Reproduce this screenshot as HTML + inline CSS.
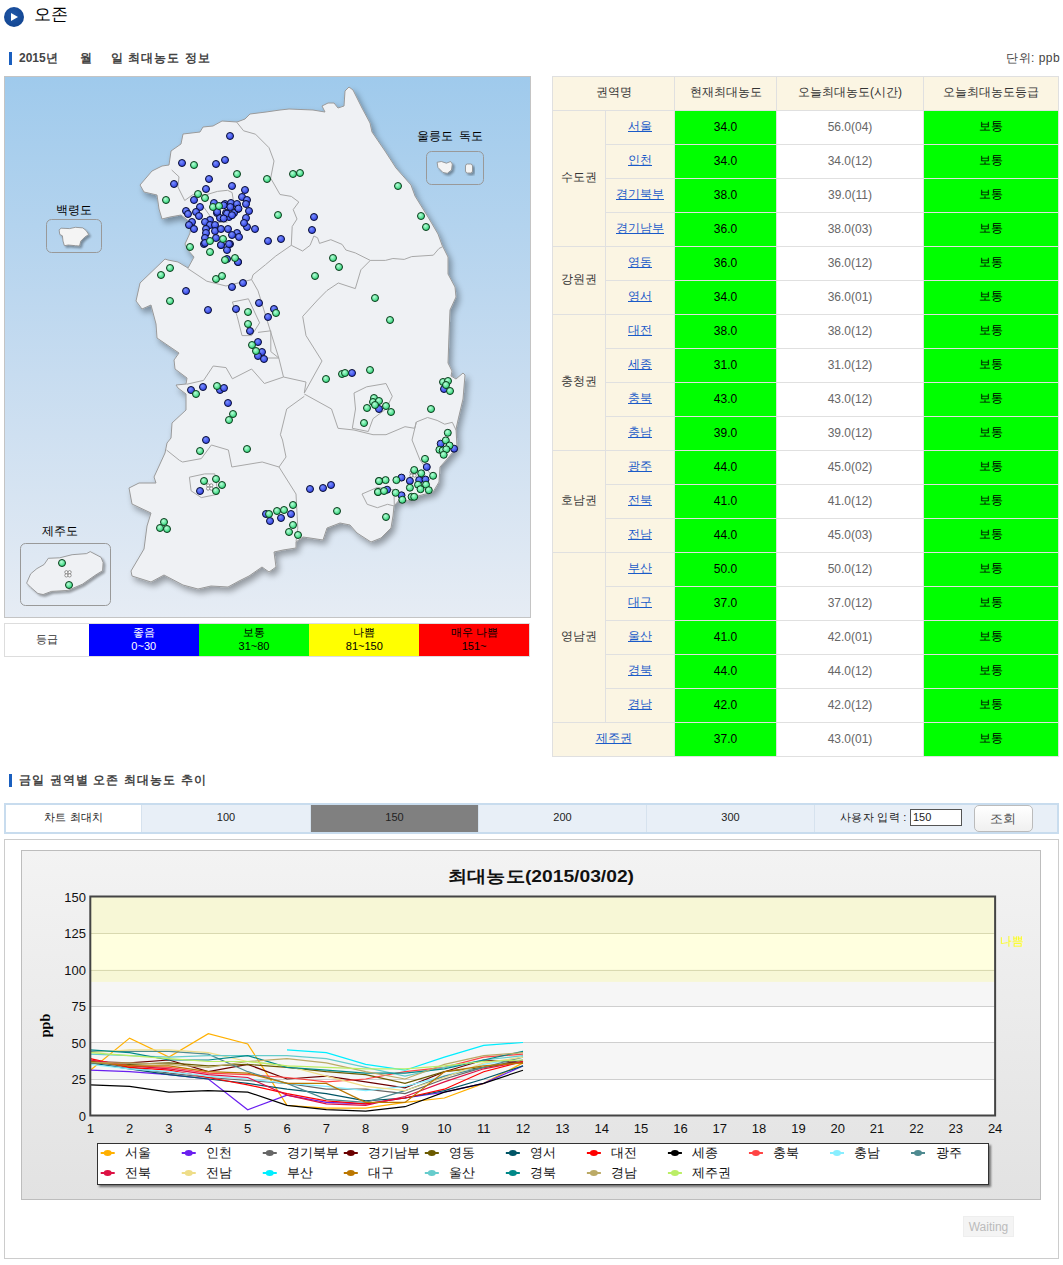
<!DOCTYPE html><html><head><meta charset="utf-8"><style>
*{margin:0;padding:0;box-sizing:border-box}
html,body{width:1063px;height:1265px;overflow:hidden;background:#fff;font-family:"Liberation Sans",sans-serif;color:#333}
.a{position:absolute}
#ttl{left:34px;top:4px;font-size:17px;color:#000;line-height:22px}
.ico{left:4px;top:7px;width:20px;height:20px;border-radius:50%;background:radial-gradient(circle at 45% 40%,#2258a8,#0d3f8a)}
.ico:after{content:"";position:absolute;left:7px;top:6px;border-left:7px solid #fff;border-top:4.5px solid transparent;border-bottom:4.5px solid transparent}
.hbar{width:3px;height:13px;background:#1a5fbf}
.h2{font-size:12px;font-weight:bold;color:#444;line-height:14px}
#leg{left:4px;top:623px;width:526px;height:34px;border:1px solid #ddd;display:flex;font-size:11px;text-align:center}
#leg div{height:100%;display:flex;flex-direction:column;justify-content:center;line-height:14px;color:#000;padding-bottom:3px}
#tbl{left:552px;top:76px;border-collapse:collapse;font-size:12px;text-align:center;table-layout:fixed}
#tbl td{border:1px solid #e0e0e0;height:34px;padding:0 0 2px 0;white-space:nowrap}
#tbl .hd{background:#fbf5e3;color:#333}
#tbl .g{background:#00ff00;color:#000}
#tbl .w{background:#fff;color:#666}
#tbl a{color:#1a5ac8;text-decoration:underline}
#bar{left:4px;top:803px;width:1055px;height:31px;border:2px solid #c8dcee;display:flex;font-size:11px;color:#222}
#bar>div{display:flex;align-items:center;justify-content:center;border-left:1px solid #d6e2ee;height:100%;background:#e8eff7;padding-bottom:3px}
#panel{left:4px;top:839px;width:1055px;height:420px;border:1px solid #ccc}
</style></head><body>
<div class="a ico"></div><div class="a" id="ttl">오존</div>
<div class="a hbar" style="left:9px;top:52px"></div>
<div class="a h2" style="left:19px;top:51px">2015년</div><div class="a h2" style="left:80px;top:51px">월</div><div class="a h2" style="left:111px;top:51px;letter-spacing:1px">일 최대농도 정보</div>
<div class="a" style="left:1006px;top:50px;font-size:12px;color:#444;letter-spacing:.5px">단위: ppb</div>
<svg class="a" style="left:4px;top:76px" width="527" height="542" viewBox="0 0 527 542"><defs><linearGradient id="sea" x1="0" y1="0" x2="0" y2="1"><stop offset="0" stop-color="#9fcaec"/><stop offset="0.55" stop-color="#c7dcf0"/><stop offset="1" stop-color="#e6ecf4"/></linearGradient><filter id="sh" x="-10%" y="-10%" width="120%" height="120%"><feGaussianBlur in="SourceAlpha" stdDeviation="3"/><feOffset dx="3" dy="4"/><feComponentTransfer><feFuncA type="linear" slope="0.35"/></feComponentTransfer><feMerge><feMergeNode/><feMergeNode in="SourceGraphic"/></feMerge></filter><radialGradient id="bd" cx="0.4" cy="0.35" r="0.7"><stop offset="0" stop-color="#7a90ff"/><stop offset="1" stop-color="#2838e0"/></radialGradient><radialGradient id="gd" cx="0.4" cy="0.35" r="0.7"><stop offset="0" stop-color="#b8ffd8"/><stop offset="1" stop-color="#22d070"/></radialGradient><filter id="sh2" x="-30%" y="-30%" width="160%" height="160%"><feGaussianBlur in="SourceAlpha" stdDeviation="1.2"/><feOffset dx="1.5" dy="2"/><feComponentTransfer><feFuncA type="linear" slope="0.35"/></feComponentTransfer><feMerge><feMergeNode/><feMergeNode in="SourceGraphic"/></feMerge></filter></defs><rect x="0.5" y="0.5" width="526" height="541" fill="url(#sea)" stroke="#c4c4c4" stroke-width="1"/><polygon points="136,109 148,95 158,90 165,89 167,75 177,68 179,58 196,56 199,51 209,50 218,45 233,46 241,43 246,38 262,36 276,34 285,33 309,34 321,36 318,30 324,27 330,27 334,32 340,30 341,15 345,11 349,14 358,32 366,47 368,56 381,75 392,92 407,109 411,120 424,141 434,158 438,169 444,181 444,198 451,211 452,221 446,234 445,259 444,287 448,295 447,300 452,303 459,297 461,299 459,323 454,344 452,353 453,371 444,382 436,391 435,406 429,416 414,420 404,425 397,422 390,430 389,440 387,452 377,462 367,466 353,457 346,449 336,447 323,452 319,464 306,462 299,461 292,466 292,472 279,474 270,476 272,491 265,496 258,491 245,500 235,505 224,511 207,510 194,513 179,509 160,499 147,506 128,500 127,495 140,473 143,450 147,437 128,428 125,412 135,407 152,407 150,401 161,377 163,367 167,362 168,347 182,334 182,318 174,312 172,309 182,308 183,302 171,293 170,284 175,277 153,262 152,248 147,229 138,233 132,225 136,207 161,183 164,184 174,186 184,192 190,181 183,173 181,168 186,157 187,147 177,139 166,141 158,143 155,133 153,119 140,116" fill="#eff1f4" stroke="#9a9a9a" stroke-width="1" filter="url(#sh)"/><rect x="42.5" y="143.5" width="55" height="33" rx="5" fill="none" stroke="#999" stroke-width="1"/><polygon points="55.1,153.9 57.1,152.2 65.6,152.6 71.5,151.3 78.8,151.9 82.1,154.5 84.7,158.5 80.8,161.1 76.8,165.1 75.5,170.0 71.5,169.7 64.3,169.0 60.4,169.7 59.0,165.1 58.4,159.8 55.8,158.5" fill="#f4f4f4" stroke="#888" stroke-width=".8" filter="url(#sh2)"/><rect x="422.5" y="75.5" width="57" height="33" rx="5" fill="none" stroke="#999" stroke-width="1"/><polygon points="433.1,86.3 437.3,85.5 442.4,87.2 446.6,85.5 448.3,88.0 447.5,94.0 443.3,97.3 439.0,96.5 433.9,91.4" fill="#f4f4f4" stroke="#888" stroke-width=".8" filter="url(#sh2)"/><rect x="461.5" y="88" width="7" height="9" rx="2" fill="#f4f4f4" stroke="#888" stroke-width=".8" filter="url(#sh2)"/><rect x="16.5" y="467.5" width="90" height="62" rx="5" fill="none" stroke="#999" stroke-width="1"/><polygon points="22.6,507.1 26.7,497.8 32.9,492.6 40.1,488.5 44.3,482.3 55.7,481.8 68.1,478.7 82.6,477.6 86.2,475.6 97.0,481.3 99.1,486.4 98.6,494.7 91.9,498.8 78.4,508.2 63.9,514.4 47.4,515.4 39.1,518.5 33.9,517.5 26.7,511.3" fill="#eff1f4" stroke="#888" stroke-width=".8" filter="url(#sh2)"/><text x="70" y="138" font-size="12" fill="#000" text-anchor="middle">백령도</text><text x="446" y="64" font-size="12" fill="#000" text-anchor="middle">울릉도 &#160;독도</text><text x="56" y="459" font-size="12" fill="#000" text-anchor="middle">제주도</text><polyline points="232.8,46.3 239.6,54.8 251.5,58.2 265.0,71.7 270.0,85.0 266.7,102.2 276.0,118.5 287.3,120.4 294.8,126.0 289.2,133.6 293.0,143.0 288.2,150.5 287.3,169.3 271.8,180.0 261.6,188.6 249.0,198.8 247.6,203.6" fill="none" stroke="#a8a8a8" stroke-width="1"/><polyline points="183.6,192.4 202.8,205.2 222.0,210.0 247.6,203.6" fill="none" stroke="#a8a8a8" stroke-width="1"/><polyline points="247.6,203.6 254.0,214.8 266.8,256.4 274.8,282.0 279.5,301.0 302.0,306.0 300.3,317.0" fill="none" stroke="#a8a8a8" stroke-width="1"/><polyline points="287.3,169.3 298.6,175.0 306.1,169.3 309.9,160.0 313.6,161.8 315.5,167.4 326.8,163.7 338.1,168.4 341.9,174.0 351.3,176.9 366.3,184.4 381.4,184.4 388.9,182.5 400.2,183.4 407.7,180.6 429.3,179.2 435.0,172.5 438.8,170.6" fill="none" stroke="#a8a8a8" stroke-width="1"/><polyline points="366.3,184.4 356.9,193.8 351.3,212.6 334.3,207.0 323.0,214.5 313.6,224.0 298.7,240.4 302.0,259.6 318.0,285.0 300.3,317.0" fill="none" stroke="#a8a8a8" stroke-width="1"/><polyline points="182.4,308.3 199.6,304.4 209.2,290.0 222.0,291.6 228.4,302.8 247.6,293.0 260.4,307.5 279.5,301.0" fill="none" stroke="#a8a8a8" stroke-width="1"/><polyline points="300.3,320.3 282.7,333.0 276.4,358.7 278.5,364.0 282.0,381.0 275.0,391.0" fill="none" stroke="#a8a8a8" stroke-width="1"/><polyline points="162.5,374.0 175.5,384.4 178.6,386.0 197.3,382.6 207.4,369.0 224.4,374.0 227.8,391.0 258.2,386.0 275.0,391.0" fill="none" stroke="#a8a8a8" stroke-width="1"/><polyline points="275.0,391.0 292.0,418.0 293.8,452.0 292.0,465.6" fill="none" stroke="#a8a8a8" stroke-width="1"/><polyline points="300.3,318.0 327.5,333.0 334.0,352.3 350.0,354.0 369.0,358.7 382.0,358.7 401.0,350.7 410.7,352.3 412.3,346.0 423.6,341.5 433.1,344.4 440.7,348.2 448.3,346.3 452.0,354.0" fill="none" stroke="#a8a8a8" stroke-width="1"/><polyline points="350.0,317.0 362.7,310.8 382.0,307.5 388.3,320.3 382.0,333.0 369.0,342.7 364.3,355.5 348.3,352.3 351.5,333.0 350.0,317.0" fill="none" stroke="#a8a8a8" stroke-width="1"/><polyline points="185.4,401.2 200.7,397.9 210.8,397.9 214.2,418.2 197.3,421.6 187.1,414.8 185.4,401.2" fill="none" stroke="#a8a8a8" stroke-width="1"/><polyline points="228.4,226.0 244.4,222.8 255.6,246.8 247.6,259.6 238.0,259.6 233.2,240.4 228.4,226.0" fill="none" stroke="#a8a8a8" stroke-width="1"/><polyline points="254.0,256.4 266.8,254.8 266.8,275.6 274.8,282.0 260.4,282.0 250.8,278.8 246.0,266.0" fill="none" stroke="#a8a8a8" stroke-width="1"/><polyline points="412.3,346.0 408.0,364.0 416.0,384.0 428.0,400.0" fill="none" stroke="#a8a8a8" stroke-width="1"/><polyline points="167.7,94.0 175.0,100.8 173.9,110.9 180.7,124.5 188.6,118.8 202.1,118.8 213.4,115.4 223.6,114.3 228.1,116.6 229.2,123.4" fill="none" stroke="#a8a8a8" stroke-width="1"/><polyline points="199.9,131.3 205.5,139.2 208.9,147.0 223.6,146.0" fill="none" stroke="#a8a8a8" stroke-width="1"/><polyline points="358.0,418.0 373.4,411.4 390.0,414.0 390.3,430.0 383.5,428.3 373.4,431.7 363.2,428.3 358.0,418.0" fill="none" stroke="#a8a8a8" stroke-width="1"/><g fill="#fff" stroke="#777" stroke-width=".8"><circle cx="62.4" cy="496.2" r="1.6"/><circle cx="65.6" cy="496.2" r="1.6"/><circle cx="62.4" cy="499.4" r="1.6"/><circle cx="65.6" cy="499.4" r="1.6"/></g><g fill="#fff" stroke="#777" stroke-width=".8"><circle cx="204.1" cy="409.4" r="1.6"/><circle cx="207.3" cy="409.4" r="1.6"/><circle cx="204.1" cy="412.6" r="1.6"/><circle cx="207.3" cy="412.6" r="1.6"/></g><g fill="#fff" stroke="#777" stroke-width=".8"><circle cx="407.4" cy="396.4" r="1.6"/><circle cx="410.6" cy="396.4" r="1.6"/><circle cx="407.4" cy="399.6" r="1.6"/><circle cx="410.6" cy="399.6" r="1.6"/></g><circle cx="226" cy="60" r="3.5" fill="url(#bd)" stroke="#0a0f30" stroke-width="1"/><circle cx="178" cy="87" r="3.5" fill="url(#bd)" stroke="#0a0f30" stroke-width="1"/><circle cx="212" cy="88" r="3.5" fill="url(#bd)" stroke="#0a0f30" stroke-width="1"/><circle cx="221" cy="84" r="3.5" fill="url(#bd)" stroke="#0a0f30" stroke-width="1"/><circle cx="205" cy="103" r="3.5" fill="url(#bd)" stroke="#0a0f30" stroke-width="1"/><circle cx="170" cy="108" r="3.5" fill="url(#bd)" stroke="#0a0f30" stroke-width="1"/><circle cx="202" cy="113" r="3.5" fill="url(#bd)" stroke="#0a0f30" stroke-width="1"/><circle cx="228" cy="110" r="3.5" fill="url(#bd)" stroke="#0a0f30" stroke-width="1"/><circle cx="241" cy="114" r="3.5" fill="url(#bd)" stroke="#0a0f30" stroke-width="1"/><circle cx="190" cy="124" r="3.5" fill="url(#bd)" stroke="#0a0f30" stroke-width="1"/><circle cx="196" cy="131" r="3.5" fill="url(#bd)" stroke="#0a0f30" stroke-width="1"/><circle cx="192" cy="136" r="3.5" fill="url(#bd)" stroke="#0a0f30" stroke-width="1"/><circle cx="195" cy="140" r="3.5" fill="url(#bd)" stroke="#0a0f30" stroke-width="1"/><circle cx="182" cy="135" r="3.5" fill="url(#bd)" stroke="#0a0f30" stroke-width="1"/><circle cx="184" cy="138" r="3.5" fill="url(#bd)" stroke="#0a0f30" stroke-width="1"/><circle cx="238" cy="121" r="3.5" fill="url(#bd)" stroke="#0a0f30" stroke-width="1"/><circle cx="243" cy="124" r="3.5" fill="url(#bd)" stroke="#0a0f30" stroke-width="1"/><circle cx="242" cy="128" r="3.5" fill="url(#bd)" stroke="#0a0f30" stroke-width="1"/><circle cx="245" cy="135" r="3.5" fill="url(#bd)" stroke="#0a0f30" stroke-width="1"/><circle cx="210" cy="127" r="3.5" fill="url(#bd)" stroke="#0a0f30" stroke-width="1"/><circle cx="221" cy="128" r="3.5" fill="url(#bd)" stroke="#0a0f30" stroke-width="1"/><circle cx="227" cy="127" r="3.5" fill="url(#bd)" stroke="#0a0f30" stroke-width="1"/><circle cx="233" cy="128" r="3.5" fill="url(#bd)" stroke="#0a0f30" stroke-width="1"/><circle cx="234" cy="133" r="3.5" fill="url(#bd)" stroke="#0a0f30" stroke-width="1"/><circle cx="213" cy="137" r="3.5" fill="url(#bd)" stroke="#0a0f30" stroke-width="1"/><circle cx="222" cy="137" r="3.5" fill="url(#bd)" stroke="#0a0f30" stroke-width="1"/><circle cx="230" cy="137" r="3.5" fill="url(#bd)" stroke="#0a0f30" stroke-width="1"/><circle cx="216" cy="142" r="3.5" fill="url(#bd)" stroke="#0a0f30" stroke-width="1"/><circle cx="225" cy="141" r="3.5" fill="url(#bd)" stroke="#0a0f30" stroke-width="1"/><circle cx="242" cy="142" r="3.5" fill="url(#bd)" stroke="#0a0f30" stroke-width="1"/><circle cx="243" cy="151" r="3.5" fill="url(#bd)" stroke="#0a0f30" stroke-width="1"/><circle cx="251" cy="153" r="3.5" fill="url(#bd)" stroke="#0a0f30" stroke-width="1"/><circle cx="240" cy="147" r="3.5" fill="url(#bd)" stroke="#0a0f30" stroke-width="1"/><circle cx="188" cy="146" r="3.5" fill="url(#bd)" stroke="#0a0f30" stroke-width="1"/><circle cx="185" cy="149" r="3.5" fill="url(#bd)" stroke="#0a0f30" stroke-width="1"/><circle cx="190" cy="153" r="3.5" fill="url(#bd)" stroke="#0a0f30" stroke-width="1"/><circle cx="206" cy="144" r="3.5" fill="url(#bd)" stroke="#0a0f30" stroke-width="1"/><circle cx="201" cy="146" r="3.5" fill="url(#bd)" stroke="#0a0f30" stroke-width="1"/><circle cx="206" cy="149" r="3.5" fill="url(#bd)" stroke="#0a0f30" stroke-width="1"/><circle cx="211" cy="149" r="3.5" fill="url(#bd)" stroke="#0a0f30" stroke-width="1"/><circle cx="202" cy="153" r="3.5" fill="url(#bd)" stroke="#0a0f30" stroke-width="1"/><circle cx="202" cy="157" r="3.5" fill="url(#bd)" stroke="#0a0f30" stroke-width="1"/><circle cx="211" cy="155" r="3.5" fill="url(#bd)" stroke="#0a0f30" stroke-width="1"/><circle cx="217" cy="153" r="3.5" fill="url(#bd)" stroke="#0a0f30" stroke-width="1"/><circle cx="224" cy="153" r="3.5" fill="url(#bd)" stroke="#0a0f30" stroke-width="1"/><circle cx="233" cy="157" r="3.5" fill="url(#bd)" stroke="#0a0f30" stroke-width="1"/><circle cx="228" cy="159" r="3.5" fill="url(#bd)" stroke="#0a0f30" stroke-width="1"/><circle cx="235" cy="161" r="3.5" fill="url(#bd)" stroke="#0a0f30" stroke-width="1"/><circle cx="201" cy="162" r="3.5" fill="url(#bd)" stroke="#0a0f30" stroke-width="1"/><circle cx="212" cy="162" r="3.5" fill="url(#bd)" stroke="#0a0f30" stroke-width="1"/><circle cx="200" cy="168" r="3.5" fill="url(#bd)" stroke="#0a0f30" stroke-width="1"/><circle cx="217" cy="169" r="3.5" fill="url(#bd)" stroke="#0a0f30" stroke-width="1"/><circle cx="226" cy="168" r="3.5" fill="url(#bd)" stroke="#0a0f30" stroke-width="1"/><circle cx="223" cy="174" r="3.5" fill="url(#bd)" stroke="#0a0f30" stroke-width="1"/><circle cx="223" cy="183" r="3.5" fill="url(#bd)" stroke="#0a0f30" stroke-width="1"/><circle cx="234" cy="186" r="3.5" fill="url(#bd)" stroke="#0a0f30" stroke-width="1"/><circle cx="264" cy="165" r="3.5" fill="url(#bd)" stroke="#0a0f30" stroke-width="1"/><circle cx="277" cy="163" r="3.5" fill="url(#bd)" stroke="#0a0f30" stroke-width="1"/><circle cx="310" cy="141" r="3.5" fill="url(#bd)" stroke="#0a0f30" stroke-width="1"/><circle cx="308" cy="154" r="3.5" fill="url(#bd)" stroke="#0a0f30" stroke-width="1"/><circle cx="201" cy="167" r="3.5" fill="url(#bd)" stroke="#0a0f30" stroke-width="1"/><circle cx="217" cy="169" r="3.5" fill="url(#bd)" stroke="#0a0f30" stroke-width="1"/><circle cx="225" cy="168" r="3.5" fill="url(#bd)" stroke="#0a0f30" stroke-width="1"/><circle cx="234" cy="186" r="3.5" fill="url(#bd)" stroke="#0a0f30" stroke-width="1"/><circle cx="228" cy="211" r="3.5" fill="url(#bd)" stroke="#0a0f30" stroke-width="1"/><circle cx="239" cy="207" r="3.5" fill="url(#bd)" stroke="#0a0f30" stroke-width="1"/><circle cx="182" cy="215" r="3.5" fill="url(#bd)" stroke="#0a0f30" stroke-width="1"/><circle cx="204" cy="234" r="3.5" fill="url(#bd)" stroke="#0a0f30" stroke-width="1"/><circle cx="232" cy="233" r="3.5" fill="url(#bd)" stroke="#0a0f30" stroke-width="1"/><circle cx="255" cy="227" r="3.5" fill="url(#bd)" stroke="#0a0f30" stroke-width="1"/><circle cx="270" cy="233" r="3.5" fill="url(#bd)" stroke="#0a0f30" stroke-width="1"/><circle cx="264" cy="241" r="3.5" fill="url(#bd)" stroke="#0a0f30" stroke-width="1"/><circle cx="246" cy="255" r="3.5" fill="url(#bd)" stroke="#0a0f30" stroke-width="1"/><circle cx="254" cy="266" r="3.5" fill="url(#bd)" stroke="#0a0f30" stroke-width="1"/><circle cx="258" cy="276" r="3.5" fill="url(#bd)" stroke="#0a0f30" stroke-width="1"/><circle cx="254" cy="280" r="3.5" fill="url(#bd)" stroke="#0a0f30" stroke-width="1"/><circle cx="260" cy="283" r="3.5" fill="url(#bd)" stroke="#0a0f30" stroke-width="1"/><circle cx="348" cy="297" r="3.5" fill="url(#bd)" stroke="#0a0f30" stroke-width="1"/><circle cx="187" cy="314" r="3.5" fill="url(#bd)" stroke="#0a0f30" stroke-width="1"/><circle cx="199" cy="311" r="3.5" fill="url(#bd)" stroke="#0a0f30" stroke-width="1"/><circle cx="216" cy="314" r="3.5" fill="url(#bd)" stroke="#0a0f30" stroke-width="1"/><circle cx="220" cy="312" r="3.5" fill="url(#bd)" stroke="#0a0f30" stroke-width="1"/><circle cx="224" cy="327" r="3.5" fill="url(#bd)" stroke="#0a0f30" stroke-width="1"/><circle cx="202" cy="364" r="3.5" fill="url(#bd)" stroke="#0a0f30" stroke-width="1"/><circle cx="375" cy="333" r="3.5" fill="url(#bd)" stroke="#0a0f30" stroke-width="1"/><circle cx="440" cy="313" r="3.5" fill="url(#bd)" stroke="#0a0f30" stroke-width="1"/><circle cx="196" cy="415" r="3.5" fill="url(#bd)" stroke="#0a0f30" stroke-width="1"/><circle cx="306" cy="413" r="3.5" fill="url(#bd)" stroke="#0a0f30" stroke-width="1"/><circle cx="319" cy="412" r="3.5" fill="url(#bd)" stroke="#0a0f30" stroke-width="1"/><circle cx="327" cy="409" r="3.5" fill="url(#bd)" stroke="#0a0f30" stroke-width="1"/><circle cx="262" cy="438" r="3.5" fill="url(#bd)" stroke="#0a0f30" stroke-width="1"/><circle cx="266" cy="445" r="3.5" fill="url(#bd)" stroke="#0a0f30" stroke-width="1"/><circle cx="277" cy="442" r="3.5" fill="url(#bd)" stroke="#0a0f30" stroke-width="1"/><circle cx="287" cy="438" r="3.5" fill="url(#bd)" stroke="#0a0f30" stroke-width="1"/><circle cx="436.7" cy="367.7" r="3.5" fill="url(#bd)" stroke="#0a0f30" stroke-width="1"/><circle cx="450.1" cy="372.7" r="3.5" fill="url(#bd)" stroke="#0a0f30" stroke-width="1"/><circle cx="422.8" cy="391" r="3.5" fill="url(#bd)" stroke="#0a0f30" stroke-width="1"/><circle cx="405.9" cy="404.9" r="3.5" fill="url(#bd)" stroke="#0a0f30" stroke-width="1"/><circle cx="415.2" cy="404.1" r="3.5" fill="url(#bd)" stroke="#0a0f30" stroke-width="1"/><circle cx="421.5" cy="403.6" r="3.5" fill="url(#bd)" stroke="#0a0f30" stroke-width="1"/><circle cx="397.5" cy="419.3" r="3.5" fill="url(#bd)" stroke="#0a0f30" stroke-width="1"/><circle cx="383.1" cy="413.7" r="3.5" fill="url(#bd)" stroke="#0a0f30" stroke-width="1"/><circle cx="397.5" cy="401.6" r="3.5" fill="url(#bd)" stroke="#0a0f30" stroke-width="1"/><circle cx="219.7" cy="129.3" r="3.5" fill="url(#bd)" stroke="#0a0f30" stroke-width="1"/><circle cx="226.3" cy="131" r="3.5" fill="url(#bd)" stroke="#0a0f30" stroke-width="1"/><circle cx="234.5" cy="132.6" r="3.5" fill="url(#bd)" stroke="#0a0f30" stroke-width="1"/><circle cx="223" cy="137.6" r="3.5" fill="url(#bd)" stroke="#0a0f30" stroke-width="1"/><circle cx="228" cy="139.2" r="3.5" fill="url(#bd)" stroke="#0a0f30" stroke-width="1"/><circle cx="219.7" cy="142.5" r="3.5" fill="url(#bd)" stroke="#0a0f30" stroke-width="1"/><circle cx="213.2" cy="135.9" r="3.5" fill="url(#bd)" stroke="#0a0f30" stroke-width="1"/><circle cx="233" cy="98" r="3.5" fill="url(#gd)" stroke="#0d3a1c" stroke-width="1"/><circle cx="263" cy="103" r="3.5" fill="url(#gd)" stroke="#0d3a1c" stroke-width="1"/><circle cx="194" cy="118" r="3.5" fill="url(#gd)" stroke="#0d3a1c" stroke-width="1"/><circle cx="201" cy="122" r="3.5" fill="url(#gd)" stroke="#0d3a1c" stroke-width="1"/><circle cx="209" cy="131" r="3.5" fill="url(#gd)" stroke="#0d3a1c" stroke-width="1"/><circle cx="215" cy="130" r="3.5" fill="url(#gd)" stroke="#0d3a1c" stroke-width="1"/><circle cx="274" cy="139" r="3.5" fill="url(#gd)" stroke="#0d3a1c" stroke-width="1"/><circle cx="219" cy="163" r="3.5" fill="url(#gd)" stroke="#0d3a1c" stroke-width="1"/><circle cx="206" cy="165" r="3.5" fill="url(#gd)" stroke="#0d3a1c" stroke-width="1"/><circle cx="186" cy="171" r="3.5" fill="url(#gd)" stroke="#0d3a1c" stroke-width="1"/><circle cx="206" cy="176" r="3.5" fill="url(#gd)" stroke="#0d3a1c" stroke-width="1"/><circle cx="221" cy="184" r="3.5" fill="url(#gd)" stroke="#0d3a1c" stroke-width="1"/><circle cx="231" cy="182" r="3.5" fill="url(#gd)" stroke="#0d3a1c" stroke-width="1"/><circle cx="190" cy="89" r="3.5" fill="url(#gd)" stroke="#0d3a1c" stroke-width="1"/><circle cx="289" cy="98" r="3.5" fill="url(#gd)" stroke="#0d3a1c" stroke-width="1"/><circle cx="296" cy="97" r="3.5" fill="url(#gd)" stroke="#0d3a1c" stroke-width="1"/><circle cx="394" cy="110" r="3.5" fill="url(#gd)" stroke="#0d3a1c" stroke-width="1"/><circle cx="162" cy="124" r="3.5" fill="url(#gd)" stroke="#0d3a1c" stroke-width="1"/><circle cx="417" cy="140" r="3.5" fill="url(#gd)" stroke="#0d3a1c" stroke-width="1"/><circle cx="422" cy="151" r="3.5" fill="url(#gd)" stroke="#0d3a1c" stroke-width="1"/><circle cx="329" cy="182" r="3.5" fill="url(#gd)" stroke="#0d3a1c" stroke-width="1"/><circle cx="335" cy="191" r="3.5" fill="url(#gd)" stroke="#0d3a1c" stroke-width="1"/><circle cx="311" cy="200" r="3.5" fill="url(#gd)" stroke="#0d3a1c" stroke-width="1"/><circle cx="371" cy="222" r="3.5" fill="url(#gd)" stroke="#0d3a1c" stroke-width="1"/><circle cx="386" cy="244" r="3.5" fill="url(#gd)" stroke="#0d3a1c" stroke-width="1"/><circle cx="157" cy="199" r="3.5" fill="url(#gd)" stroke="#0d3a1c" stroke-width="1"/><circle cx="166" cy="192" r="3.5" fill="url(#gd)" stroke="#0d3a1c" stroke-width="1"/><circle cx="212" cy="203" r="3.5" fill="url(#gd)" stroke="#0d3a1c" stroke-width="1"/><circle cx="218" cy="200" r="3.5" fill="url(#gd)" stroke="#0d3a1c" stroke-width="1"/><circle cx="166" cy="225" r="3.5" fill="url(#gd)" stroke="#0d3a1c" stroke-width="1"/><circle cx="244" cy="236" r="3.5" fill="url(#gd)" stroke="#0d3a1c" stroke-width="1"/><circle cx="244" cy="248" r="3.5" fill="url(#gd)" stroke="#0d3a1c" stroke-width="1"/><circle cx="248" cy="269" r="3.5" fill="url(#gd)" stroke="#0d3a1c" stroke-width="1"/><circle cx="252" cy="275" r="3.5" fill="url(#gd)" stroke="#0d3a1c" stroke-width="1"/><circle cx="322" cy="303" r="3.5" fill="url(#gd)" stroke="#0d3a1c" stroke-width="1"/><circle cx="338" cy="298" r="3.5" fill="url(#gd)" stroke="#0d3a1c" stroke-width="1"/><circle cx="341" cy="297" r="3.5" fill="url(#gd)" stroke="#0d3a1c" stroke-width="1"/><circle cx="366" cy="294" r="3.5" fill="url(#gd)" stroke="#0d3a1c" stroke-width="1"/><circle cx="192" cy="318" r="3.5" fill="url(#gd)" stroke="#0d3a1c" stroke-width="1"/><circle cx="213" cy="310" r="3.5" fill="url(#gd)" stroke="#0d3a1c" stroke-width="1"/><circle cx="229" cy="338" r="3.5" fill="url(#gd)" stroke="#0d3a1c" stroke-width="1"/><circle cx="225" cy="344" r="3.5" fill="url(#gd)" stroke="#0d3a1c" stroke-width="1"/><circle cx="196" cy="375" r="3.5" fill="url(#gd)" stroke="#0d3a1c" stroke-width="1"/><circle cx="243" cy="373" r="3.5" fill="url(#gd)" stroke="#0d3a1c" stroke-width="1"/><circle cx="360" cy="347" r="3.5" fill="url(#gd)" stroke="#0d3a1c" stroke-width="1"/><circle cx="370" cy="322" r="3.5" fill="url(#gd)" stroke="#0d3a1c" stroke-width="1"/><circle cx="369" cy="326" r="3.5" fill="url(#gd)" stroke="#0d3a1c" stroke-width="1"/><circle cx="375" cy="325" r="3.5" fill="url(#gd)" stroke="#0d3a1c" stroke-width="1"/><circle cx="363" cy="332" r="3.5" fill="url(#gd)" stroke="#0d3a1c" stroke-width="1"/><circle cx="382" cy="330" r="3.5" fill="url(#gd)" stroke="#0d3a1c" stroke-width="1"/><circle cx="387" cy="336" r="3.5" fill="url(#gd)" stroke="#0d3a1c" stroke-width="1"/><circle cx="371" cy="329" r="3.5" fill="url(#gd)" stroke="#0d3a1c" stroke-width="1"/><circle cx="427" cy="333" r="3.5" fill="url(#gd)" stroke="#0d3a1c" stroke-width="1"/><circle cx="439" cy="306" r="3.5" fill="url(#gd)" stroke="#0d3a1c" stroke-width="1"/><circle cx="444" cy="305" r="3.5" fill="url(#gd)" stroke="#0d3a1c" stroke-width="1"/><circle cx="442" cy="309" r="3.5" fill="url(#gd)" stroke="#0d3a1c" stroke-width="1"/><circle cx="446" cy="315" r="3.5" fill="url(#gd)" stroke="#0d3a1c" stroke-width="1"/><circle cx="200" cy="405" r="3.5" fill="url(#gd)" stroke="#0d3a1c" stroke-width="1"/><circle cx="212" cy="403" r="3.5" fill="url(#gd)" stroke="#0d3a1c" stroke-width="1"/><circle cx="218" cy="409" r="3.5" fill="url(#gd)" stroke="#0d3a1c" stroke-width="1"/><circle cx="212" cy="415" r="3.5" fill="url(#gd)" stroke="#0d3a1c" stroke-width="1"/><circle cx="156" cy="452" r="3.5" fill="url(#gd)" stroke="#0d3a1c" stroke-width="1"/><circle cx="163" cy="453" r="3.5" fill="url(#gd)" stroke="#0d3a1c" stroke-width="1"/><circle cx="160" cy="446" r="3.5" fill="url(#gd)" stroke="#0d3a1c" stroke-width="1"/><circle cx="289" cy="429" r="3.5" fill="url(#gd)" stroke="#0d3a1c" stroke-width="1"/><circle cx="280" cy="434" r="3.5" fill="url(#gd)" stroke="#0d3a1c" stroke-width="1"/><circle cx="273" cy="435" r="3.5" fill="url(#gd)" stroke="#0d3a1c" stroke-width="1"/><circle cx="265" cy="438" r="3.5" fill="url(#gd)" stroke="#0d3a1c" stroke-width="1"/><circle cx="289" cy="449" r="3.5" fill="url(#gd)" stroke="#0d3a1c" stroke-width="1"/><circle cx="285" cy="456" r="3.5" fill="url(#gd)" stroke="#0d3a1c" stroke-width="1"/><circle cx="294" cy="459" r="3.5" fill="url(#gd)" stroke="#0d3a1c" stroke-width="1"/><circle cx="333" cy="435" r="3.5" fill="url(#gd)" stroke="#0d3a1c" stroke-width="1"/><circle cx="382" cy="441" r="3.5" fill="url(#gd)" stroke="#0d3a1c" stroke-width="1"/><circle cx="375" cy="405" r="3.5" fill="url(#gd)" stroke="#0d3a1c" stroke-width="1"/><circle cx="374" cy="416" r="3.5" fill="url(#gd)" stroke="#0d3a1c" stroke-width="1"/><circle cx="58" cy="487" r="3.5" fill="url(#gd)" stroke="#0d3a1c" stroke-width="1"/><circle cx="65" cy="509" r="3.5" fill="url(#gd)" stroke="#0d3a1c" stroke-width="1"/><circle cx="443.8" cy="356.8" r="3.5" fill="url(#gd)" stroke="#0d3a1c" stroke-width="1"/><circle cx="441.8" cy="364.4" r="3.5" fill="url(#gd)" stroke="#0d3a1c" stroke-width="1"/><circle cx="445.6" cy="369.5" r="3.5" fill="url(#gd)" stroke="#0d3a1c" stroke-width="1"/><circle cx="435.4" cy="373.8" r="3.5" fill="url(#gd)" stroke="#0d3a1c" stroke-width="1"/><circle cx="438.7" cy="374.5" r="3.5" fill="url(#gd)" stroke="#0d3a1c" stroke-width="1"/><circle cx="442.3" cy="373.3" r="3.5" fill="url(#gd)" stroke="#0d3a1c" stroke-width="1"/><circle cx="439.7" cy="378.8" r="3.5" fill="url(#gd)" stroke="#0d3a1c" stroke-width="1"/><circle cx="421" cy="382.9" r="3.5" fill="url(#gd)" stroke="#0d3a1c" stroke-width="1"/><circle cx="410.2" cy="394" r="3.5" fill="url(#gd)" stroke="#0d3a1c" stroke-width="1"/><circle cx="417.2" cy="397.3" r="3.5" fill="url(#gd)" stroke="#0d3a1c" stroke-width="1"/><circle cx="429.1" cy="399.8" r="3.5" fill="url(#gd)" stroke="#0d3a1c" stroke-width="1"/><circle cx="414" cy="408.7" r="3.5" fill="url(#gd)" stroke="#0d3a1c" stroke-width="1"/><circle cx="422" cy="408.7" r="3.5" fill="url(#gd)" stroke="#0d3a1c" stroke-width="1"/><circle cx="405.9" cy="411.7" r="3.5" fill="url(#gd)" stroke="#0d3a1c" stroke-width="1"/><circle cx="416.5" cy="413.2" r="3.5" fill="url(#gd)" stroke="#0d3a1c" stroke-width="1"/><circle cx="424.8" cy="414.2" r="3.5" fill="url(#gd)" stroke="#0d3a1c" stroke-width="1"/><circle cx="407.6" cy="420.8" r="3.5" fill="url(#gd)" stroke="#0d3a1c" stroke-width="1"/><circle cx="410.2" cy="420.8" r="3.5" fill="url(#gd)" stroke="#0d3a1c" stroke-width="1"/><circle cx="398.3" cy="423.8" r="3.5" fill="url(#gd)" stroke="#0d3a1c" stroke-width="1"/><circle cx="391.7" cy="416.8" r="3.5" fill="url(#gd)" stroke="#0d3a1c" stroke-width="1"/><circle cx="381.6" cy="404.1" r="3.5" fill="url(#gd)" stroke="#0d3a1c" stroke-width="1"/><circle cx="392.4" cy="404.1" r="3.5" fill="url(#gd)" stroke="#0d3a1c" stroke-width="1"/><circle cx="374" cy="416" r="3.5" fill="url(#gd)" stroke="#0d3a1c" stroke-width="1"/><circle cx="380" cy="415" r="3.5" fill="url(#gd)" stroke="#0d3a1c" stroke-width="1"/><circle cx="375" cy="405" r="3.5" fill="url(#gd)" stroke="#0d3a1c" stroke-width="1"/><circle cx="272" cy="237" r="3.5" fill="url(#gd)" stroke="#0d3a1c" stroke-width="1"/></svg>
<div class="a" id="leg"><div style="width:84px;background:#fff;color:#333">등급</div><div style="width:110px;background:#0000ff;color:#fff">좋음<br>0~30</div><div style="width:111px;background:#00ff00;color:#000">보통<br>31~80</div><div style="width:110px;background:#ffff00;color:#000">나쁨<br>81~150</div><div style="width:110px;background:#ff0000;color:#000">매우 나쁨<br>151~</div></div>
<table class="a" id="tbl"><colgroup><col style="width:53px"><col style="width:69px"><col style="width:102px"><col style="width:147px"><col style="width:135px"></colgroup><tr><td class="hd" colspan="2">권역명</td><td class="hd">현재최대농도</td><td class="hd">오늘최대농도(시간)</td><td class="hd">오늘최대농도등급</td></tr><tr><td class="hd" rowspan="4">수도권</td><td class="hd"><a>서울</a></td><td class="g">34.0</td><td class="w">56.0(04)</td><td class="g">보통</td></tr><tr><td class="hd"><a>인천</a></td><td class="g">34.0</td><td class="w">34.0(12)</td><td class="g">보통</td></tr><tr><td class="hd"><a>경기북부</a></td><td class="g">38.0</td><td class="w">39.0(11)</td><td class="g">보통</td></tr><tr><td class="hd"><a>경기남부</a></td><td class="g">36.0</td><td class="w">38.0(03)</td><td class="g">보통</td></tr><tr><td class="hd" rowspan="2">강원권</td><td class="hd"><a>영동</a></td><td class="g">36.0</td><td class="w">36.0(12)</td><td class="g">보통</td></tr><tr><td class="hd"><a>영서</a></td><td class="g">34.0</td><td class="w">36.0(01)</td><td class="g">보통</td></tr><tr><td class="hd" rowspan="4">충청권</td><td class="hd"><a>대전</a></td><td class="g">38.0</td><td class="w">38.0(12)</td><td class="g">보통</td></tr><tr><td class="hd"><a>세종</a></td><td class="g">31.0</td><td class="w">31.0(12)</td><td class="g">보통</td></tr><tr><td class="hd"><a>충북</a></td><td class="g">43.0</td><td class="w">43.0(12)</td><td class="g">보통</td></tr><tr><td class="hd"><a>충남</a></td><td class="g">39.0</td><td class="w">39.0(12)</td><td class="g">보통</td></tr><tr><td class="hd" rowspan="3">호남권</td><td class="hd"><a>광주</a></td><td class="g">44.0</td><td class="w">45.0(02)</td><td class="g">보통</td></tr><tr><td class="hd"><a>전북</a></td><td class="g">41.0</td><td class="w">41.0(12)</td><td class="g">보통</td></tr><tr><td class="hd"><a>전남</a></td><td class="g">44.0</td><td class="w">45.0(03)</td><td class="g">보통</td></tr><tr><td class="hd" rowspan="5">영남권</td><td class="hd"><a>부산</a></td><td class="g">50.0</td><td class="w">50.0(12)</td><td class="g">보통</td></tr><tr><td class="hd"><a>대구</a></td><td class="g">37.0</td><td class="w">37.0(12)</td><td class="g">보통</td></tr><tr><td class="hd"><a>울산</a></td><td class="g">41.0</td><td class="w">42.0(01)</td><td class="g">보통</td></tr><tr><td class="hd"><a>경북</a></td><td class="g">44.0</td><td class="w">44.0(12)</td><td class="g">보통</td></tr><tr><td class="hd"><a>경남</a></td><td class="g">42.0</td><td class="w">42.0(12)</td><td class="g">보통</td></tr><tr><td class="hd" colspan="2"><a>제주권</a></td><td class="g">37.0</td><td class="w">43.0(01)</td><td class="g">보통</td></tr></table>
<div class="a hbar" style="left:9px;top:774px"></div>
<div class="a h2" style="left:19px;top:773px;letter-spacing:1.1px">금일 권역별 오존 최대농도 추이</div>
<div class="a" id="bar"><div style="width:135px;background:#fff;border-left:0">차트 최대치</div><div style="width:169px">100</div><div style="width:168px;background:#808080">150</div><div style="width:168px">200</div><div style="width:168px">300</div><div style="flex:1;justify-content:flex-start;padding-left:25px;letter-spacing:.3px">사용자 입력 :&nbsp;<span style="display:inline-block;width:52px;height:17px;border:1px solid #555;background:#fff;font-size:11px;line-height:15px;padding-left:2px;letter-spacing:0">150</span><span style="display:inline-block;position:relative;top:1px;margin-left:12px;width:59px;height:27px;border:1px solid #bbb;border-radius:5px;background:linear-gradient(#fff,#f0f0f0);font-size:13px;line-height:25px;text-align:center;color:#555;letter-spacing:0">조회</span></div></div>
<div class="a" id="panel"></div>
<svg class="a" style="left:0;top:0" width="1063" height="1265" viewBox="0 0 1063 1265"><defs><linearGradient id="cg" x1="0" y1="0" x2="0" y2="1"><stop offset="0" stop-color="#f3f3f3"/><stop offset="1" stop-color="#e2e2e2"/></linearGradient><filter id="lsh"><feGaussianBlur in="SourceAlpha" stdDeviation="1.2"/><feOffset dx="2" dy="2"/><feComponentTransfer><feFuncA type="linear" slope="0.5"/></feComponentTransfer><feMerge><feMergeNode/><feMergeNode in="SourceGraphic"/></feMerge></filter></defs><rect x="21.5" y="850.5" width="1019" height="349" fill="url(#cg)" stroke="#bdbdbd"/><rect x="90.3" y="896.5" width="904.82" height="219" fill="#fff"/><rect x="90.3" y="1042.5" width="904.82" height="36.5" fill="#f6f6f6"/><rect x="90.3" y="981.91" width="904.82" height="24.09" fill="#f6f6f6"/><rect x="90.3" y="896.5" width="904.82" height="85.41" fill="#f7f7d6"/><rect x="90.3" y="933" width="904.82" height="36.5" fill="#ffffdf"/><line x1="90.3" y1="1079.5" x2="995.12" y2="1079.5" stroke="#cfcfcf" stroke-width="1"/><line x1="90.3" y1="1042.5" x2="995.12" y2="1042.5" stroke="#cfcfcf" stroke-width="1"/><line x1="90.3" y1="1006.5" x2="995.12" y2="1006.5" stroke="#cfcfcf" stroke-width="1"/><line x1="90.3" y1="970.5" x2="995.12" y2="970.5" stroke="#d9d9b0" stroke-width="1"/><line x1="90.3" y1="933.5" x2="995.12" y2="933.5" stroke="#d9d9b0" stroke-width="1"/><polyline points="90.3,1070.2 129.6,1038.1 169.0,1057.1 208.3,1033.7 247.7,1044.0 287.0,1105.3 326.3,1108.2 365.7,1108.2 405.0,1102.4 444.4,1098.0 483.7,1083.4 523.0,1062.9" fill="none" stroke="#ffb000" stroke-width="1.2"/><polyline points="90.3,1070.2 129.6,1071.7 169.0,1074.6 208.3,1079.0 247.7,1109.7 287.0,1095.1 326.3,1102.4 365.7,1103.8 405.0,1098.0 444.4,1092.1 483.7,1083.4 523.0,1065.9" fill="none" stroke="#6a1ff0" stroke-width="1.2"/><polyline points="90.3,1061.5 129.6,1067.3 169.0,1073.2 208.3,1077.5 247.7,1080.5 287.0,1083.4 326.3,1089.2 365.7,1089.2 405.0,1093.6 444.4,1079.0 483.7,1067.3 523.0,1060.0" fill="none" stroke="#666666" stroke-width="1.2"/><polyline points="90.3,1061.5 129.6,1062.9 169.0,1060.0 208.3,1071.7 247.7,1064.4 287.0,1079.0 326.3,1076.1 365.7,1081.9 405.0,1087.8 444.4,1071.7 483.7,1060.0 523.0,1062.9" fill="none" stroke="#6b0000" stroke-width="1.2"/><polyline points="90.3,1062.9 129.6,1064.4 169.0,1062.9 208.3,1065.9 247.7,1064.4 287.0,1067.3 326.3,1071.7 365.7,1074.6 405.0,1083.4 444.4,1071.7 483.7,1067.3 523.0,1061.5" fill="none" stroke="#6b5a00" stroke-width="1.2"/><polyline points="90.3,1062.9 129.6,1068.8 169.0,1074.6 208.3,1079.0 247.7,1083.4 287.0,1089.2 326.3,1093.6 365.7,1100.9 405.0,1098.0 444.4,1090.7 483.7,1079.0 523.0,1065.9" fill="none" stroke="#005566" stroke-width="1.2"/><polyline points="90.3,1058.6 129.6,1067.3 169.0,1070.2 208.3,1077.5 247.7,1084.8 287.0,1093.6 326.3,1100.9 365.7,1103.8 405.0,1098.0 444.4,1089.2 483.7,1071.7 523.0,1061.5" fill="none" stroke="#ff0000" stroke-width="1.2"/><polyline points="90.3,1084.8 129.6,1086.3 169.0,1092.1 208.3,1090.7 247.7,1092.1 287.0,1105.3 326.3,1109.7 365.7,1111.1 405.0,1106.7 444.4,1092.1 483.7,1083.4 523.0,1070.2" fill="none" stroke="#000000" stroke-width="1.2"/><polyline points="90.3,1060.0 129.6,1065.9 169.0,1067.3 208.3,1073.2 247.7,1074.6 287.0,1077.5 326.3,1081.9 365.7,1079.0 405.0,1071.7 444.4,1067.3 483.7,1057.1 523.0,1054.2" fill="none" stroke="#ff4444" stroke-width="1.2"/><polyline points="90.3,1064.4 129.6,1068.8 169.0,1071.7 208.3,1076.1 247.7,1079.0 287.0,1083.4 326.3,1086.3 365.7,1090.7 405.0,1086.3 444.4,1076.1 483.7,1064.4 523.0,1057.1" fill="none" stroke="#88eeff" stroke-width="1.2"/><polyline points="90.3,1051.3 129.6,1051.3 169.0,1051.3 208.3,1054.2 247.7,1071.7 287.0,1083.4 326.3,1099.4 365.7,1102.4 405.0,1090.7 444.4,1076.1 483.7,1067.3 523.0,1057.1" fill="none" stroke="#4e8a90" stroke-width="1.2"/><polyline points="90.3,1060.0 129.6,1065.9 169.0,1068.8 208.3,1074.6 247.7,1077.5 287.0,1095.1 326.3,1103.8 365.7,1105.3 405.0,1096.5 444.4,1081.9 483.7,1068.8 523.0,1061.5" fill="none" stroke="#dd1144" stroke-width="1.2"/><polyline points="90.3,1052.7 129.6,1049.8 169.0,1049.8 208.3,1052.7 247.7,1061.5 287.0,1065.9 326.3,1076.1 365.7,1086.3 405.0,1090.7 444.4,1077.5 483.7,1062.9 523.0,1057.1" fill="none" stroke="#eedd88" stroke-width="1.2"/><polyline points="287.0,1049.8 326.3,1052.7 365.7,1064.4 405.0,1070.2 444.4,1057.1 483.7,1045.4 523.0,1042.5" fill="none" stroke="#00eeff" stroke-width="1.2"/><polyline points="90.3,1061.5 129.6,1065.9 169.0,1065.9 208.3,1071.7 247.7,1073.2 287.0,1083.4 326.3,1083.4 365.7,1102.4 405.0,1102.4 444.4,1071.7 483.7,1065.9 523.0,1062.9" fill="none" stroke="#bb7700" stroke-width="1.2"/><polyline points="90.3,1054.2 129.6,1055.6 169.0,1057.1 208.3,1055.6 247.7,1055.6 287.0,1055.6 326.3,1058.6 365.7,1067.3 405.0,1076.1 444.4,1067.3 483.7,1060.0 523.0,1055.6" fill="none" stroke="#66cccc" stroke-width="1.2"/><polyline points="90.3,1049.8 129.6,1052.7 169.0,1060.0 208.3,1060.0 247.7,1055.6 287.0,1067.3 326.3,1070.2 365.7,1073.2 405.0,1073.2 444.4,1068.8 483.7,1060.0 523.0,1051.3" fill="none" stroke="#008888" stroke-width="1.2"/><polyline points="90.3,1062.9 129.6,1062.9 169.0,1064.4 208.3,1067.3 247.7,1061.5 287.0,1058.6 326.3,1062.9 365.7,1071.7 405.0,1079.0 444.4,1064.4 483.7,1055.6 523.0,1052.7" fill="none" stroke="#bbaa66" stroke-width="1.2"/><polyline points="90.3,1052.7 129.6,1055.6 169.0,1058.6 208.3,1061.5 247.7,1061.5 287.0,1065.9 326.3,1067.3 365.7,1068.8 405.0,1068.8 444.4,1065.9 483.7,1061.5 523.0,1060.0" fill="none" stroke="#bbee66" stroke-width="1.2"/><rect x="90.3" y="896.5" width="904.82" height="219" fill="none" stroke="#444" stroke-width="2"/><text x="86" y="1120.5" font-size="13" text-anchor="end" fill="#111">0</text><text x="86" y="1084" font-size="13" text-anchor="end" fill="#111">25</text><text x="86" y="1047.5" font-size="13" text-anchor="end" fill="#111">50</text><text x="86" y="1011" font-size="13" text-anchor="end" fill="#111">75</text><text x="86" y="974.5" font-size="13" text-anchor="end" fill="#111">100</text><text x="86" y="938" font-size="13" text-anchor="end" fill="#111">125</text><text x="86" y="901.5" font-size="13" text-anchor="end" fill="#111">150</text><text x="90.3" y="1133" font-size="13" text-anchor="middle" fill="#111">1</text><text x="129.64" y="1133" font-size="13" text-anchor="middle" fill="#111">2</text><text x="168.98" y="1133" font-size="13" text-anchor="middle" fill="#111">3</text><text x="208.32" y="1133" font-size="13" text-anchor="middle" fill="#111">4</text><text x="247.66" y="1133" font-size="13" text-anchor="middle" fill="#111">5</text><text x="287" y="1133" font-size="13" text-anchor="middle" fill="#111">6</text><text x="326.34" y="1133" font-size="13" text-anchor="middle" fill="#111">7</text><text x="365.68" y="1133" font-size="13" text-anchor="middle" fill="#111">8</text><text x="405.02" y="1133" font-size="13" text-anchor="middle" fill="#111">9</text><text x="444.36" y="1133" font-size="13" text-anchor="middle" fill="#111">10</text><text x="483.7" y="1133" font-size="13" text-anchor="middle" fill="#111">11</text><text x="523.04" y="1133" font-size="13" text-anchor="middle" fill="#111">12</text><text x="562.38" y="1133" font-size="13" text-anchor="middle" fill="#111">13</text><text x="601.72" y="1133" font-size="13" text-anchor="middle" fill="#111">14</text><text x="641.06" y="1133" font-size="13" text-anchor="middle" fill="#111">15</text><text x="680.4" y="1133" font-size="13" text-anchor="middle" fill="#111">16</text><text x="719.74" y="1133" font-size="13" text-anchor="middle" fill="#111">17</text><text x="759.08" y="1133" font-size="13" text-anchor="middle" fill="#111">18</text><text x="798.42" y="1133" font-size="13" text-anchor="middle" fill="#111">19</text><text x="837.76" y="1133" font-size="13" text-anchor="middle" fill="#111">20</text><text x="877.1" y="1133" font-size="13" text-anchor="middle" fill="#111">21</text><text x="916.44" y="1133" font-size="13" text-anchor="middle" fill="#111">22</text><text x="955.78" y="1133" font-size="13" text-anchor="middle" fill="#111">23</text><text x="995.12" y="1133" font-size="13" text-anchor="middle" fill="#111">24</text><text x="0" y="0" font-size="14" font-weight="bold" font-family="Liberation Serif" fill="#000" transform="translate(49.5,1025.5) rotate(-90)" text-anchor="middle">ppb</text><text x="448" y="882" font-size="17" font-weight="bold" fill="#111" textLength="186" lengthAdjust="spacingAndGlyphs">최대농도(2015/03/02)</text><text x="1000" y="945" font-size="12" fill="#ffff00">나쁨</text><rect x="97.5" y="1143.5" width="891" height="41" fill="#fff" stroke="#333" filter="url(#lsh)"/><line x1="100.7" y1="1153" x2="114.7" y2="1153" stroke="#ffb000" stroke-width="2"/><ellipse cx="107.7" cy="1153" rx="4" ry="3" fill="#ffb000"/><text x="125.2" y="1157" font-size="13" fill="#111">서울</text><line x1="181.73" y1="1153" x2="195.73" y2="1153" stroke="#6a1ff0" stroke-width="2"/><ellipse cx="188.73" cy="1153" rx="4" ry="3" fill="#6a1ff0"/><text x="206.23" y="1157" font-size="13" fill="#111">인천</text><line x1="262.76" y1="1153" x2="276.76" y2="1153" stroke="#666666" stroke-width="2"/><ellipse cx="269.76" cy="1153" rx="4" ry="3" fill="#666666"/><text x="287.26" y="1157" font-size="13" fill="#111">경기북부</text><line x1="343.79" y1="1153" x2="357.79" y2="1153" stroke="#6b0000" stroke-width="2"/><ellipse cx="350.79" cy="1153" rx="4" ry="3" fill="#6b0000"/><text x="368.29" y="1157" font-size="13" fill="#111">경기남부</text><line x1="424.82" y1="1153" x2="438.82" y2="1153" stroke="#6b5a00" stroke-width="2"/><ellipse cx="431.82" cy="1153" rx="4" ry="3" fill="#6b5a00"/><text x="449.32" y="1157" font-size="13" fill="#111">영동</text><line x1="505.85" y1="1153" x2="519.85" y2="1153" stroke="#005566" stroke-width="2"/><ellipse cx="512.85" cy="1153" rx="4" ry="3" fill="#005566"/><text x="530.35" y="1157" font-size="13" fill="#111">영서</text><line x1="586.88" y1="1153" x2="600.88" y2="1153" stroke="#ff0000" stroke-width="2"/><ellipse cx="593.88" cy="1153" rx="4" ry="3" fill="#ff0000"/><text x="611.38" y="1157" font-size="13" fill="#111">대전</text><line x1="667.91" y1="1153" x2="681.91" y2="1153" stroke="#000000" stroke-width="2"/><ellipse cx="674.91" cy="1153" rx="4" ry="3" fill="#000000"/><text x="692.41" y="1157" font-size="13" fill="#111">세종</text><line x1="748.94" y1="1153" x2="762.94" y2="1153" stroke="#ff4444" stroke-width="2"/><ellipse cx="755.94" cy="1153" rx="4" ry="3" fill="#ff4444"/><text x="773.44" y="1157" font-size="13" fill="#111">충북</text><line x1="829.97" y1="1153" x2="843.97" y2="1153" stroke="#88eeff" stroke-width="2"/><ellipse cx="836.97" cy="1153" rx="4" ry="3" fill="#88eeff"/><text x="854.47" y="1157" font-size="13" fill="#111">충남</text><line x1="911" y1="1153" x2="925" y2="1153" stroke="#4e8a90" stroke-width="2"/><ellipse cx="918" cy="1153" rx="4" ry="3" fill="#4e8a90"/><text x="935.5" y="1157" font-size="13" fill="#111">광주</text><line x1="100.7" y1="1173" x2="114.7" y2="1173" stroke="#dd1144" stroke-width="2"/><ellipse cx="107.7" cy="1173" rx="4" ry="3" fill="#dd1144"/><text x="125.2" y="1177" font-size="13" fill="#111">전북</text><line x1="181.73" y1="1173" x2="195.73" y2="1173" stroke="#eedd88" stroke-width="2"/><ellipse cx="188.73" cy="1173" rx="4" ry="3" fill="#eedd88"/><text x="206.23" y="1177" font-size="13" fill="#111">전남</text><line x1="262.76" y1="1173" x2="276.76" y2="1173" stroke="#00eeff" stroke-width="2"/><ellipse cx="269.76" cy="1173" rx="4" ry="3" fill="#00eeff"/><text x="287.26" y="1177" font-size="13" fill="#111">부산</text><line x1="343.79" y1="1173" x2="357.79" y2="1173" stroke="#bb7700" stroke-width="2"/><ellipse cx="350.79" cy="1173" rx="4" ry="3" fill="#bb7700"/><text x="368.29" y="1177" font-size="13" fill="#111">대구</text><line x1="424.82" y1="1173" x2="438.82" y2="1173" stroke="#66cccc" stroke-width="2"/><ellipse cx="431.82" cy="1173" rx="4" ry="3" fill="#66cccc"/><text x="449.32" y="1177" font-size="13" fill="#111">울산</text><line x1="505.85" y1="1173" x2="519.85" y2="1173" stroke="#008888" stroke-width="2"/><ellipse cx="512.85" cy="1173" rx="4" ry="3" fill="#008888"/><text x="530.35" y="1177" font-size="13" fill="#111">경북</text><line x1="586.88" y1="1173" x2="600.88" y2="1173" stroke="#bbaa66" stroke-width="2"/><ellipse cx="593.88" cy="1173" rx="4" ry="3" fill="#bbaa66"/><text x="611.38" y="1177" font-size="13" fill="#111">경남</text><line x1="667.91" y1="1173" x2="681.91" y2="1173" stroke="#bbee66" stroke-width="2"/><ellipse cx="674.91" cy="1173" rx="4" ry="3" fill="#bbee66"/><text x="692.41" y="1177" font-size="13" fill="#111">제주권</text></svg>
<div class="a" style="left:963px;top:1216px;width:51px;height:21px;background:#f4f4f4;border:1px solid #e4e4e4;color:#bbb;font-size:12px;text-align:center;line-height:21px;border-color:#eee">Waiting</div>
</body></html>
